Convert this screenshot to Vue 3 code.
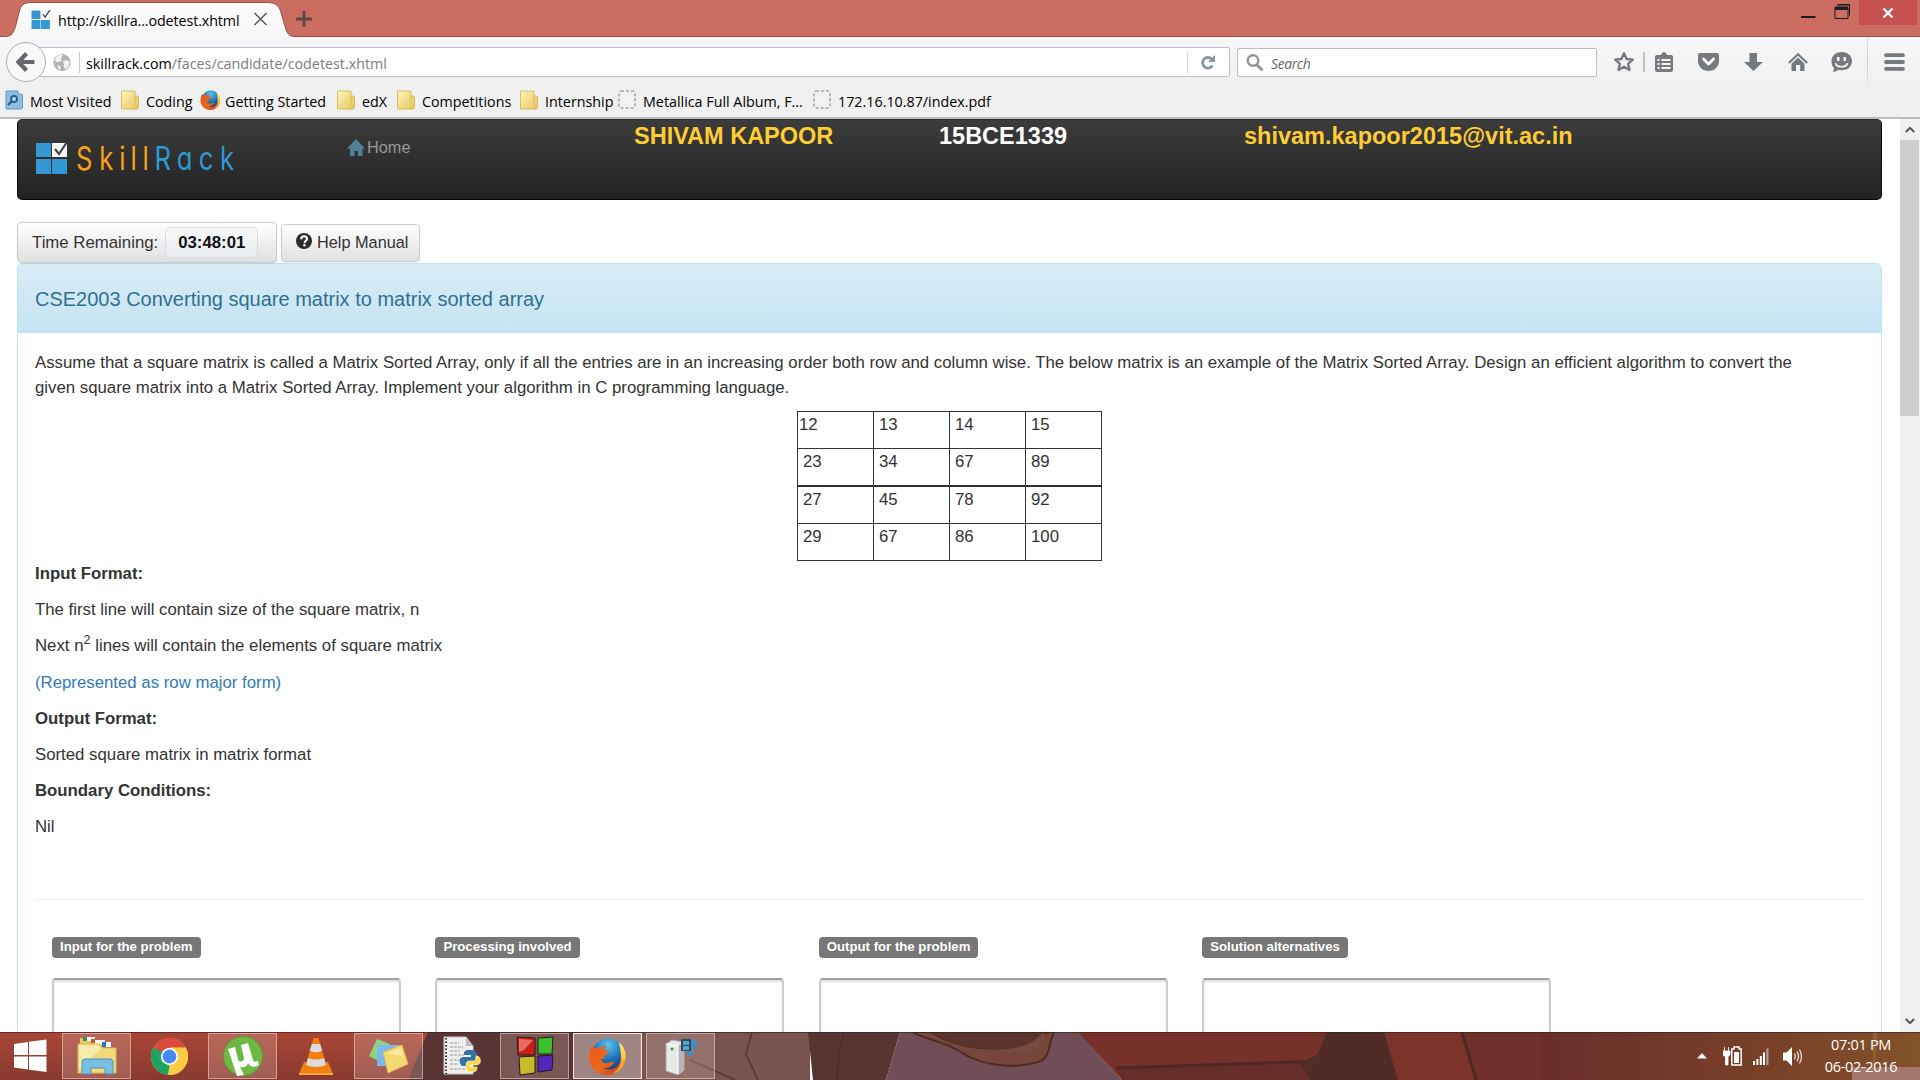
<script setup>
const bookmarks = [
  { icon: 'visited', label: 'Most Visited', width: 116 },
  { icon: 'folder', label: 'Coding', width: 79 },
  { icon: 'firefox', label: 'Getting Started', width: 137 },
  { icon: 'folder', label: 'edX', width: 60 },
  { icon: 'folder', label: 'Competitions', width: 123 },
  { icon: 'folder', label: 'Internship', width: 98 },
  { icon: 'blank', label: 'Metallica Full Album, F...', width: 195 },
  { icon: 'blank', label: '172.16.10.87/index.pdf', width: 200 },
]
const matrix = [
  ['12', '13', '14', '15'],
  ['23', '34', '67', '89'],
  ['27', '45', '78', '92'],
  ['29', '67', '86', '100'],
]
const columns = ['Input for the problem', 'Processing involved', 'Output for the problem', 'Solution alternatives']
</script>

<template>
  <div class="screen">
    <svg class="defs" width="0" height="0" aria-hidden="true">
      <defs>
        <linearGradient id="folderFill" x1="0" y1="0" x2="1" y2="1">
          <stop offset="0" stop-color="#fdf5c0" /><stop offset="1" stop-color="#e6c95c" />
        </linearGradient>
        <radialGradient id="globeBlue" cx=".5" cy=".2" r=".8">
          <stop offset="0" stop-color="#5cc3ee" /><stop offset=".6" stop-color="#1c6fb5" /><stop offset="1" stop-color="#123f7d" />
        </radialGradient>
        <linearGradient id="foxFill" x1="0" y1="0" x2="1" y2="1">
          <stop offset="0" stop-color="#e8571d" /><stop offset=".55" stop-color="#ea6a1e" /><stop offset="1" stop-color="#c8371b" />
        </linearGradient>
        <linearGradient id="tailFill" x1="0" y1="0" x2="0" y2="1">
          <stop offset="0" stop-color="#fff27a" /><stop offset=".5" stop-color="#fbc12e" /><stop offset="1" stop-color="#ee7a1d" />
        </linearGradient>
        <symbol id="firefox" viewBox="0 0 36 36">
          <circle cx="18.500" cy="16" r="15.500" fill="url(#globeBlue)" />
          <path d="M29 4c5 4 7.500 10 6.500 16.500C34 30 27 36 18 36c10-4 14-12 13-20-.3-5-1-8-2-12z" fill="url(#tailFill)" />
          <path d="M3.500 6.500c.5 1.800 1.200 2.800 2.500 3.600 2-1 4.500-1.300 6.500-.6 1.500-1.500 3-2.200 5-2.500-1.500 1.500-2.300 3-2.500 4.800 1.500.8 3.500.8 5 1-.2 2-2.500 2.800-5 4.200.3 1.500.3 2.500-.2 3.500-1.500-.6-2.700-.4-3.300.4 1.500 3.500 5 4.500 8 3 2.500-1.200 4.500-1 5.500.3-.8 1-2 1.400-3 2.600-2 2.400-5.500 3.200-8.500 2 4 3 11 2.500 15-2.300 1.700-2 2.500-4.500 2.700-7C33 29 26.500 36 17.500 36 8 36 0 29 0 19c0-5 1.200-9 3.500-12.500z" fill="url(#foxFill)" />
          <path d="M31 19c1 7-3 13-9 15.500 7-1 12.500-7 13-14-1.200 3-2.500 4-3 4 .2-2-.2-4-1-5.500z" fill="#f8a62a" />
        </symbol>
        <symbol id="skill" viewBox="0 0 32 32">
          <path d="M0 1h15v14H0zM0 17h15v15H0zM16 17h15v15H16z" fill="#3499d2" />
          <path d="M16 1h15v14H16z" fill="#f8f8f8" />
          <path d="M19 7l4 5 8-12" fill="none" stroke="#444" stroke-width="2.200" />
        </symbol>
      </defs>
    </svg>

    <header class="titlebar">
      <div class="tab">
        <svg class="tab-shape" width="298" height="37" viewBox="0 0 298 37">
          <defs><linearGradient id="tabFill" x1="0" y1="0" x2="0" y2="1"><stop offset="0" stop-color="#fdfdfd" /><stop offset="1" stop-color="#f6f6f6" /></linearGradient></defs>
          <path d="M0 36.500h5c7 0 9-4 11-12l3-12C20.500 5 24 2.500 31 2.500h236c8 0 12 2.500 14 10l4 14c2 7 4 10 10 10h3v1H0z" fill="url(#tabFill)" />
          <path d="M0 36.500h5c7 0 9-4 11-12l3-12C20.500 5 24 2.500 31 2.500h236c8 0 12 2.500 14 10l4 14c2 7 4 10 10 10h3" fill="none" stroke="#96504a" />
        </svg>
        <svg class="tab-icon" width="20" height="19"><use href="#skill" /></svg>
        <span class="tab-title">http://skillra...odetest.xhtml</span>
        <svg class="tab-close" width="15" height="14" viewBox="0 0 15 14"><path d="M1.500 1l12 12M13.500 1l-12 12" stroke="#555" stroke-width="1.500" /></svg>
      </div>
      <svg class="newtab" width="16" height="16" viewBox="0 0 16 16"><path d="M8 0v16M0 8h16" stroke="#5d4a48" stroke-width="3" /></svg>
      <div class="window-buttons">
        <svg width="58" height="25" viewBox="0 0 58 25"><path d="M0 16h14.500v2H0z" fill="#1e1e1e" /><path d="M36.500 4.500h12v11M36 5h13" fill="none" stroke="#1e1e1e" /><path d="M34 7.500h13v11H34z" fill="none" stroke="#1e1e1e" /><path d="M34 6.500h13V10H34z" fill="#1e1e1e" /></svg>
        <span class="close"><svg width="12" height="10" viewBox="0 0 12 10"><path d="M1.500 0.500l9 9M10.500 0.500l-9 9" stroke="#fff" stroke-width="2.200" /></svg></span>
      </div>
    </header>

    <nav class="toolbar">
      <div class="back"><svg width="20" height="20" viewBox="0 0 20 20"><path d="M10.500 1.500L2.500 10l8 8.500M3 10h15.500" fill="none" stroke="#66686c" stroke-width="4.200" /></svg></div>
      <div class="address">
        <svg width="18" height="19" viewBox="0 0 18 19"><circle cx="9" cy="9.500" r="8.600" fill="#b2b2b2" /><path d="M3 4l4-2.500 3 1-2 3 1 2-4 2-3-1.500zM10 8l4-1 2.500 2-1 5-3 2.500-2-3 .5-2zM4 12l3 1 1 3-2 1z" fill="#f1f1f1" /></svg>
        <i class="rule"></i>
        <span class="url"><b>skillrack.com</b>/faces/candidate/codetest.xhtml</span>
        <span class="reload"><svg width="16" height="15" viewBox="0 0 16 15"><path d="M11.800 4.200A5.300 5.300 0 1 0 12.500 10.500" fill="none" stroke="#8a95a3" stroke-width="2.800" /><path d="M15 0v7H8z" fill="#8a95a3" /></svg></span>
      </div>
      <div class="search">
        <svg width="18" height="18" viewBox="0 0 18 18"><circle cx="7" cy="6.500" r="5.300" fill="none" stroke="#949494" stroke-width="2.400" /><path d="M10.500 10.500l6 6" stroke="#949494" stroke-width="3" /></svg>
        <em>Search</em>
      </div>
      <div class="tools">
        <svg width="22" height="22" viewBox="0 0 22 22"><path d="M11 2.200l2.600 5.800 6.200.6-4.700 4.200 1.400 6.200-5.500-3.300L5.500 19l1.400-6.200L2.200 8.600 8.400 8z" fill="none" stroke="#76797d" stroke-width="2.400" stroke-linejoin="round" /></svg>
        <i class="divider"></i>
        <svg width="18" height="20" viewBox="0 0 18 20"><path d="M2 3h4c0-1 2-3 3-3s3 2 3 3h4q2 0 2 2v13q0 2-2 2H2q-2 0-2-2V5q0-2 2-2z" fill="#76797d" /><path d="M2.500 7h2v2h-2zM6.500 7h9v2h-9zM2.500 11h2v2h-2zM6.500 11h9v2h-9zM2.500 15h2v2h-2zM6.500 15h9v2h-9z" fill="#f5f5f5" /></svg>
        <svg class="gap-a" width="21" height="18" viewBox="0 0 21 18"><path d="M2 0h17q2 0 2 2v6c0 6-5 10-10.500 10S0 14 0 8V2q0-2 2-2z" fill="#76797d" /><path d="M5.500 6l5 5 5-5" fill="none" stroke="#fff" stroke-width="2.800" stroke-linecap="round" stroke-linejoin="round" /></svg>
        <svg class="gap-a" width="19" height="18" viewBox="0 0 19 18"><path d="M5.500 0h7.500v9H19L9.500 18 0 9h5.500z" fill="#76797d" /></svg>
        <svg class="gap-a" width="20" height="18" viewBox="0 0 20 18"><path d="M.8 10L10 1.200 19.200 10" fill="none" stroke="#76797d" stroke-width="2" /><path d="M10 4.500l6.500 6.300V18h-4.300v-6H8v6H3.500v-7.200z" fill="#76797d" /></svg>
        <svg class="gap-b" width="21" height="20" viewBox="0 0 21 20"><path d="M10.500 0C17 0 21 4 21 9s-4 9.300-10 9.300c-1.500 0-2.500-.2-3.500-.6C6 19 4 20 1.500 19.500c1-1 1.700-2 1.500-3.600C1 14 .5 12 .5 9c0-5 4-9 10-9z" fill="#76797d" /><path d="M6 5h2.500v4H6zM12.500 5H15v4h-2.500z" fill="#f5f5f5" /><path d="M4.500 11c1 5 11 5 12 0" fill="none" stroke="#f5f5f5" stroke-width="1.700" /></svg>
        <i class="panel-rule"></i>
        <svg class="gap-c" width="21" height="18" viewBox="0 0 21 18"><path d="M2 2.200h17M2 9h17M2 15.800h17" stroke="#76797d" stroke-width="3.800" stroke-linecap="round" /></svg>
      </div>
    </nav>

    <div class="bookmarks">
      <div v-for="b in bookmarks" :key="b.label" class="bookmark" :style="{ width: b.width + 'px' }">
        <span class="bm-icon">
          <svg v-if="b.icon === 'visited'" width="18" height="20" viewBox="0 0 18 20"><path d="M1 1h12v3h3q1.500 0 1.500 1.500V17q0 2-2 2H1z" fill="#8cc0e2" stroke="#6598bd" /><circle cx="9" cy="9" r="3" fill="#b9dcf2" stroke="#275f91" stroke-width="2" /><path d="M7 11l-4 4" stroke="#275f91" stroke-width="2.400" /></svg>
          <svg v-else-if="b.icon === 'folder'" width="18" height="20" viewBox="0 0 18 20"><path d="M14 6h2q1.500 0 1.500 2v9q0 2-2 2H12z" fill="#ecd36f" stroke="#d2b653" /><path d="M.5 1h13.500v12q0 2 1.500 2v4H.5z" fill="url(#folderFill)" stroke="#d9bf60" /></svg>
          <svg v-else-if="b.icon === 'firefox'" width="21" height="20"><use href="#firefox" /></svg>
          <svg v-else width="18" height="19" viewBox="0 0 18 19"><rect x="1" y="1" width="16" height="17" rx="2" fill="#f2f2f2" stroke="#a6a6a6" stroke-width="1.600" stroke-dasharray="3 2" /></svg>
        </span>
        <span>{{ b.label }}</span>
      </div>
    </div>

    <div class="viewport">
      <main class="page">
        <div class="navbar">
          <div class="brand">
            <svg width="200" height="46" viewBox="0 0 200 46">
              <use href="#skill" x="0" y="8" width="32" height="32" />
              <g transform="scale(.8 1)" class="wordmark">
                <text y="36" x="50 79 104 118 133" fill="#f9a11b">Skill</text>
                <text y="36" x="148 176 203.500 230" fill="#2d9ad4">Rack</text>
              </g>
            </svg>
          </div>
          <a class="home"><svg width="18" height="17" viewBox="0 0 18 17"><path d="M9 0l9 9.500h-2.500V17H11v-5H7.500v5H3V9.500H0z" fill="#4f8199" /></svg>Home</a>
          <strong class="name">SHIVAM KAPOOR</strong>
          <strong class="regno">15BCE1339</strong>
          <strong class="mail">shivam.kapoor2015@vit.ac.in</strong>
        </div>

        <div class="buttons">
          <div class="btn timer"><span>Time Remaining:</span><b>03:48:01</b></div>
          <div class="btn help"><svg width="16" height="16" viewBox="0 0 16 16"><circle cx="8" cy="8" r="8" fill="#2b2b2b" /><path d="M5.200 6.300C5.200 2.200 11 2.500 11 5.800c0 2-2.400 2-2.400 4.200" fill="none" stroke="#fff" stroke-width="2.200" /><circle cx="8.500" cy="12.300" r="1.300" fill="#fff" /></svg><span>Help Manual</span></div>
        </div>

        <section class="panel">
          <h3>CSE2003 Converting square matrix to matrix sorted array</h3>
          <div class="body">
            <p class="intro">
              <span class="l1">Assume that a square matrix is called a Matrix Sorted Array, only if all the entries are in an increasing order both row and column wise. The below matrix is an example of the Matrix Sorted Array. Design an efficient algorithm to convert the</span><br>
              <span>given square matrix into a Matrix Sorted Array. Implement your algorithm in C programming language.</span>
            </p>
            <div class="matrix">
              <div v-for="(row, r) in matrix" :key="r" class="row" :class="{ heavy: r === 2 }">
                <span v-for="(cell, c) in row" :key="c" class="cell" :class="{ tight: r === 0 && c === 0 }">{{ cell }}</span>
              </div>
            </div>
            <div class="notes">
              <p><b>Input Format:</b></p>
              <p>The first line will contain size of the square matrix, n</p>
              <p>Next n<sup>2</sup> lines will contain the elements of square matrix</p>
              <p class="blue">(Represented as row major form)</p>
              <p><b>Output Format:</b></p>
              <p>Sorted square matrix in matrix format</p>
              <p><b>Boundary Conditions:</b></p>
              <p>Nil</p>
            </div>
            <div class="answers">
              <div v-for="c in columns" :key="c" class="answer">
                <span class="label">{{ c }}</span>
                <div class="area"></div>
              </div>
            </div>
          </div>
        </section>
      </main>
      <aside class="scrollbar">
        <svg width="10" height="7" viewBox="0 0 10 7"><path d="M.8 6L5 1.800 9.200 6" fill="none" stroke="#555" stroke-width="2" /></svg>
        <div class="thumb"></div>
        <svg class="down" width="10" height="7" viewBox="0 0 10 7"><path d="M.8 1L5 5.200 9.200 1" fill="none" stroke="#555" stroke-width="2" /></svg>
      </aside>
    </div>

    <footer class="taskbar">
      <svg class="wallpaper" width="1920" height="48" viewBox="0 0 1920 48">
        <defs>
          <linearGradient id="redL" x1="0" x2="0" y1="0" y2="1"><stop offset="0" stop-color="#a94636" /><stop offset="1" stop-color="#893a30" /></linearGradient>
          <linearGradient id="rightEnd" x1="0" x2="1"><stop offset="0" stop-color="#6a2e2a" /><stop offset=".6" stop-color="#784028" /><stop offset="1" stop-color="#83532a" /></linearGradient>
        </defs>
        <rect width="440" height="48" fill="url(#redL)" />
        <path d="M428 0h280v48H408z" fill="#583434" />
        <path d="M640 0h170v48H640z" fill="#79534d" />
        <path d="M690 28l45 20M752 0l-6 22 12 26" stroke="#5d3d38" fill="none" stroke-width="2" />
        <path d="M808 0h92l-14 48h-73z" fill="#583433" />
        <path d="M844 0q-6 20-7 48" stroke="#492a2a" fill="none" />
        <path d="M900 0h179l43 48H886z" fill="#714e57" />
        <path d="M912 0h142c-7 14-2 28-20 31-24 6-55 2-75-12-14-9-35-12-47-19z" fill="#754639" stroke="#4f2b26" stroke-width="2" />
        <path d="M930 0h118c-6 10-12 15-30 17-30 3-66-2-88-17z" fill="#5a332d" stroke="#4f2b26" />
        <path d="M978 17c28 2 52 0 64-16l4 2c-2 18-26 24-68 14z" fill="#764a3e" />
        <path d="M1078 0h310l12 48h-278z" fill="#75312a" />
        <path d="M1116 36l206-7v19h-200z" fill="#672d29" />
        <path d="M1116 36l206-7" stroke="#4f2723" stroke-width="3" />
        <path d="M1327 0h57l14 48h-88l-10-16 18-10z" fill="#502c26" />
        <path d="M1384 0h78l14 48h-78z" fill="#7c342a" />
        <path d="M1462 0h118v48h-104z" fill="#70302a" />
        <path d="M1462 0l14 48" stroke="#4f2723" stroke-width="3" />
        <rect x="1540" width="380" height="48" fill="url(#rightEnd)" />
        <path d="M1873 0h4l-2 35h-2z" fill="#a06d36" opacity=".6" />
        <path d="M1852 35h68v13h-68z" fill="#a5766b" />
        <path d="M0 .5h1920" stroke="#3a2020" opacity=".65" />
      </svg>
      <div class="start"><svg width="33" height="34" viewBox="0 0 33 34"><path d="M0 5l14-2v13H0zM15 2.800L32.500.5V16H15zM0 17.500h14v13L0 28.500zM15 17.500h17.500V33L15 30.700z" fill="#fff" /></svg></div>
      <div class="apps">
        <div class="app open">
          <svg width="40" height="40" viewBox="0 0 40 40"><path d="M3 2h9l2 3h12v25H3z" fill="#e3c665" /><path d="M6 1h5v4H6z" fill="#398f4c" /><path d="M10 1h8v4h-8zM18 4h10v4H18z" fill="#fafafa" /><path d="M14 3h4v4h-4z" fill="#d94b35" /><path d="M26 6h8v5h-8z" fill="#fff" /><path d="M25 6h4v5h-4z" fill="#2d76bb" /><path d="M1 8h22l2 4h14v25H1z" fill="#f0da79" stroke="#d9bd58" /><path d="M2 9h20l2 4-22 20z" fill="#f8ecad" /><path d="M5 26q0-3 3-3h25q3 0 3 3v12h-8v-6H14v6H5z" fill="#79bfe4" stroke="#4a94c6" /></svg>
        </div>
        <div class="app">
          <svg width="37" height="37" viewBox="0 0 36 36"><circle cx="18" cy="18" r="18" fill="#fdce44" /><path d="M18 18L2.400 9A18 18 0 0 1 33.600 9z" fill="#d84b3e" /><path d="M18 9h15.600A18 18 0 0 1 18 36l8-14z" fill="#fccb43" /><path d="M2.400 9l7.800 13.500L18 27l-1.500 9A18 18 0 0 1 2.400 9z" fill="#1ea261" /><path d="M2.400 9A18 18 0 0 1 33.600 9H18z" fill="#d84b3e" /><path d="M2.400 9L11 22l7-13z" fill="#d84b3e" /><path d="M2.400 9l8 14L18 18z" fill="#1ea261" /><circle cx="18" cy="18" r="8.300" fill="#fff" /><circle cx="18" cy="18" r="6.700" fill="#4688f4" /></svg>
        </div>
        <div class="app open">
          <svg width="40" height="40" viewBox="0 0 40 40"><circle cx="20" cy="20" r="19.500" fill="#6db944" stroke="#5b9f37" /><path d="M5 13l7-2 3 12c1 4 6 3 6-1L18 9l7-2 5 17c.5 2 2 2 5 1l1 4c-5 3-9 2-11-2-1 4-4 5-8 4l4 8-7 1z" fill="#fff" /></svg>
        </div>
        <div class="app">
          <svg width="34" height="38" viewBox="0 0 34 38"><path d="M5 25h24l5 12H0z" fill="#ee8013" /><path d="M0 36h34v2H0z" fill="#fba738" /><path d="M14.500 1h5L28 31q-11 5-22 0z" fill="#f47e0d" /><path d="M12.800 7h8.400l2 7q-6 2.500-12.500 0zM9.200 21q8 3 15.800 0l2 7q-10 4-20 0z" fill="#dcdcdc" /></svg>
        </div>
        <div class="app open">
          <svg width="40" height="38" viewBox="0 0 40 38"><path d="M8 2l13 5-8 19-13-7z" fill="#8ed282" /><path d="M8 8h24v21H8z" fill="#79b9ed" /><path d="M14 15l19-7 6 19-20 9z" fill="#f5d972" stroke="#dbba55" /><path d="M17 16l15-5 2 8z" fill="#fceaa2" /></svg>
        </div>
        <div class="app">
          <svg width="38" height="40" viewBox="0 0 38 40"><path d="M1 1h22l7 9v28H1z" fill="#eee" stroke="#c8c8c8" /><path d="M23 1v9h7z" fill="#bbb" /><path d="M3 2v36" stroke="#4b3535" stroke-width="2" stroke-dasharray="1.500 2" /><path d="M7 7h9M7 11h13M7 15h10M7 19h14M7 24h10M7 28h8M7 33h15" stroke="#999" stroke-dasharray="3 1" /><path d="M27 14c-6 0-6 2-6 5h7v2h-8c-5 0-4 10 1 9h2c0-6 2-5 7-5 3 0 4-2 4-6 0-4-3-5-7-5z" fill="#3571a4" /><path d="M28 36c6 0 6-2 6-5h-7v-2h7c5 0 4-9 0-9h-1c0 6-2 5-6 5-3 0-4 2-4 6 0 4 2 5 5 5z" fill="#fed644" stroke="#fff" stroke-width=".6" /></svg>
        </div>
        <div class="app open">
          <svg width="38" height="40" viewBox="0 0 38 40"><path d="M1 1l18 1v17H2z" fill="#c91f1a" stroke="#27181a" /><path d="M3 3l14 1-9 10-5 2z" fill="#e66b62" /><path d="M22 2l15-1-1 17H22z" fill="#3cbf2c" stroke="#27181a" /><path d="M3 21l16-1v17L4 39z" fill="#c9bb28" stroke="#27181a" /><path d="M22 20l15-1-1 15-14 2z" fill="#5127bc" stroke="#27181a" /></svg>
        </div>
        <div class="app open active"><svg width="37" height="37"><use href="#firefox" /></svg></div>
        <div class="app open">
          <svg width="36" height="38" viewBox="0 0 36 38"><path d="M3 7l6-4 12 2v28l-6 5-12-4z" fill="#e9e9e9" stroke="#aaa" /><path d="M15 9l6-4v28l-6 5z" fill="#b7b7b7" /><path d="M3 7l12 2v28" fill="none" stroke="#fff" /><circle cx="9" cy="12" r="1.500" fill="#3a9c35" /><path d="M18 2h10v12H18z" fill="#384652" /><path d="M20 4h6v4h-6zM20 9h6v4h-6z" fill="#4ca6d9" /><path d="M28 15V1q2 3 5 4 2 4 0 7 0-4-3-5v9q-2 4-5 2-3-3 3-3z" fill="#2c93dc" /></svg>
        </div>
      </div>
      <div class="tray">
        <svg width="10" height="6" viewBox="0 0 10 6"><path d="M5 0l5 5.500H0z" fill="#f2f2f2" /></svg>
        <svg class="battery" width="19" height="20" viewBox="0 0 19 20"><path d="M1.500 1v4M5.500 1v4M0 5h7v3q0 2-2 2.500V19H2.500v-8.500Q0 10 0 8z" fill="#fff" stroke="#fff" stroke-width=".8" /><path d="M11 1h5v2h2.200v16H8.800V3H11z" fill="none" stroke="#fff" stroke-width="1.500" /><path d="M11 6h5v11h-5z" fill="#fff" /></svg>
        <svg class="signal" width="16" height="17" viewBox="0 0 16 17"><path d="M0 13h2v4H0zM3.400 11h2v6h-2zM6.800 8h2v9h-2zM10 4.500h2V17h-2z" fill="#fff" /><path d="M13.300.5h2.200V17h-2.200z" fill="#aaa096" /></svg>
        <svg class="speaker" width="20" height="19" viewBox="0 0 20 19"><path d="M0 5.500h3.500L9 0v19l-5.500-5.500H0z" fill="#fff" /><path d="M11.500 6.500q1.500 3 0 6M14 4.500q3 5 0 10M16.500 2.500q4 7 0 14" fill="none" stroke="#e8ddd3" stroke-width="1.300" /></svg>
        <div class="clock"><span>07:01 PM</span><span>06-02-2016</span></div>
      </div>
    </footer>
  </div>
</template>

<style>
html, body { margin: 0; overflow: hidden; background: #fff; }
</style>

<style scoped>
* { box-sizing: border-box; }
svg { display: block; flex: none; }
.screen { width: 1920px; height: 1080px; display: flex; flex-direction: column; overflow: hidden; font-family: "Open Sans", "Noto Sans", sans-serif; color: #000; }
.defs { position: absolute; }

.titlebar { height: 37px; flex: none; display: flex; background: #cb6d60; box-shadow: inset 0 -1px #96504a; }
.tab { position: relative; width: 298px; height: 37px; display: flex; align-items: center; padding: 1px 0 0 31px; }
.tab-shape { position: absolute; left: 0; top: 0; }
.tab-icon, .tab-title, .tab-close { position: relative; }
.tab-title { width: 184px; margin: 3px 0 0 7px; font-size: 14.300px; letter-spacing: -.1px; white-space: nowrap; }
.tab-close { margin-left: 11px; }
.newtab { margin: 11px 0 0 -2px; }
.window-buttons { display: flex; margin-left: auto; padding-right: 3px; }
.close { width: 58px; height: 25px; background: #c75050; display: flex; align-items: center; justify-content: center; }

.toolbar { height: 50px; flex: none; display: flex; align-items: flex-start; background: linear-gradient(#f7f7f7, #f0f0f0); }
.back { position: relative; z-index: 1; width: 40px; height: 40px; margin: 5px 0 0 6px; border: 1px solid #aab0bb; border-radius: 50%; background: #f9f9f9; display: flex; align-items: center; justify-content: center; }
.address { width: 1192px; height: 30px; margin: 10px 0 0 -8px; padding-left: 14px; border: 1px solid #b6bfcf; border-radius: 0 2px 2px 0; background: #fff; display: flex; align-items: center; }
.rule { width: 1px; height: 21px; margin: 0 6px 0 8px; background: #ccc; }
.url { font-size: 14.300px; color: #7d7d7d; white-space: nowrap; padding-top: 2px; }
.url b { font-weight: 400; color: #000; }
.reload { width: 42px; height: 21px; margin-left: auto; border-left: 1px solid #d4d4d4; display: flex; align-items: center; padding-left: 12px; }
.search { width: 360px; height: 29px; margin: 11px 0 0 7px; padding-left: 8px; border: 1px solid #b6bfcf; border-radius: 2px; background: #fff; display: flex; align-items: center; }
.search em { font-size: 14px; letter-spacing: -.4px; color: #666; margin: 2px 0 0 7px; }
.tools { display: flex; align-items: center; height: 50px; margin-left: 16px; }
.divider { width: 2px; height: 20px; margin: 0 10px 0 8px; background: #c3c3c3; }
.gap-a { margin-left: 25px; }
.gap-b { margin-left: 23px; }
.gap-c { margin-left: 16px; }
.panel-rule { width: 1px; height: 50px; margin-left: 15px; background: linear-gradient(#e0e0e0, #ccc 50%, #e6e6e6); }

.bookmarks { height: 32px; flex: none; display: flex; align-items: center; padding: 0 0 2px 5px; background: #f0f0f0; border-bottom: 2px solid #bdbdbd; }
.bookmark { display: flex; align-items: center; flex: none; font-size: 14.300px; white-space: nowrap; }
.bm-icon { width: 25px; height: 20px; flex: none; margin-top: -3px; }

.viewport { height: 913px; flex: none; display: flex; background: #fff; overflow: hidden; font-family: "Liberation Sans", Arial, sans-serif; }
.page { width: 1900px; padding: 0 18px 0 17px; overflow: hidden; color: #333; font-size: 16.800px; }
.navbar { height: 81px; display: flex; align-items: flex-start; border: 1px solid #080808; border-top-color: #2d2d2d; border-radius: 5px; background: linear-gradient(#3c3c3c, #222); white-space: nowrap; }
.brand { width: 329px; padding: 14px 0 0 18px; }
.wordmark text { font-family: Inter, "Lato", sans-serif; font-size: 32px; font-feature-settings: "cv11"; font-weight: 400; }
.home { width: 287px; display: flex; align-items: center; gap: 2px; padding-top: 18px; color: #999; font-size: 16.300px; }
.navbar strong { font-size: 23.500px; line-height: 32px; color: #fc3; }
.navbar .name { width: 305px; }
.navbar .regno { width: 305px; color: #fff; }

.buttons { display: flex; align-items: center; height: 41px; margin-top: 22px; }
.btn { border: 1px solid #ccc; border-radius: 4px; background: linear-gradient(#fff, #e0e0e0); box-shadow: 0 1px 2px rgba(0,0,0,.08); display: flex; align-items: center; color: #333; white-space: nowrap; }
.timer { width: 260px; height: 41px; padding-left: 14px; }
.timer b { width: 93px; height: 31px; margin-left: 7px; border: 1px solid #dcdcdc; border-radius: 5px; background: linear-gradient(#f6f7f9, #e9ecf2); display: flex; align-items: center; justify-content: center; color: #111; padding-top: 1px; }
.help { width: 139px; height: 38px; margin-left: 4px; padding-left: 14px; gap: 5px; font-size: 16.300px; }
.help svg { margin-top: -3px; }

.panel { width: 1865px; height: 800px; border: 1px solid #bce8f1; border-radius: 5px 5px 0 0; }
.panel h3 { margin: 0; height: 69px; padding: 0 17px; font-size: 20px; font-weight: 400; line-height: 70px; color: #31708f; background: linear-gradient(#d9edf7, #c4e3f3); border-radius: 4px 4px 0 0; white-space: nowrap; }
.body { padding: 17px; }
.intro { margin: 0; line-height: 25px; white-space: nowrap; }
.matrix { width: 305px; margin: 11px 0 0 762px; border: 1px solid #333; border-bottom: 0; }
.row { display: flex; height: 37px; border-bottom: 1px solid #333; }
.row.heavy { height: 38px; border-top: 1px solid #333; }
.cell { width: 76px; padding: 0 0 0 5px; line-height: 25px; border-right: 1px solid #333; }
.cell:last-child { width: 75px; border-right: 0; }
.cell.tight { padding-left: 1px; }
.notes { height: 327px; padding-top: 1px; border-bottom: 1px solid #eee; height: 339px; }
.notes p { margin: 0 0 12.200px; height: 24px; line-height: 24px; }
.notes sup { font-size: 12.600px; line-height: 0; position: relative; top: -.1em; }
.blue { color: #337ab7; }
.answers { display: flex; padding: 36px 0 0 17px; }
.answer { width: 383.400px; flex: none; }
.label { display: inline-block; height: 21px; padding: 0 8px; border-radius: 4px; background: #777; color: #fff; font-size: 13.200px; font-weight: 700; line-height: 19px; white-space: nowrap; }
.area { width: 349px; height: 90px; margin-top: 20px; border: 2px solid #ccc; border-top-color: #a2a2a2; border-radius: 4px; box-shadow: inset 0 2px 2px rgba(0,0,0,.12); }
.scrollbar { width: 20px; background: #f0f0f0; display: flex; flex-direction: column; align-items: center; padding-top: 7px; }
.thumb { width: 19px; height: 276px; margin: 7px 1px 0 0; background: #cdcdcd; }
.down { margin: auto 0 7px; }

.taskbar { position: relative; height: 48px; flex: none; display: flex; overflow: hidden; }
.wallpaper { position: absolute; left: 0; top: 0; }
.start { position: relative; width: 62px; padding: 7px 0 0 14px; }
.apps { position: relative; display: flex; gap: 4px; padding-top: 1px; }
.app { width: 69px; height: 46px; display: flex; align-items: center; justify-content: center; }
.open { border: 1px solid rgba(255,225,215,.5); background: rgba(255,235,225,.2); }
.active { border-color: #f0e6e3; background: rgba(255,245,240,.42); }
.tray { position: relative; display: flex; align-items: center; margin-left: auto; color: #fff; padding-right: 19px; }
.battery { margin-left: 16px; }
.signal { margin-left: 11px; }
.speaker { margin-left: 14px; }
.clock { width: 80px; margin-left: 18px; display: flex; flex-direction: column; align-items: center; font-size: 14.500px; line-height: 22px; letter-spacing: -.3px; white-space: nowrap; }
</style>
